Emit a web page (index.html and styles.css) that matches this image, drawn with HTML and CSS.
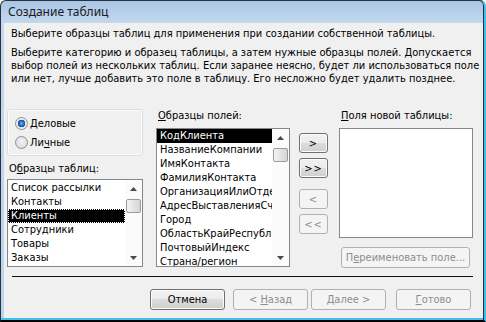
FILE: index.html
```html
<!DOCTYPE html>
<html lang="ru">
<head>
    <meta charset="UTF-8">
    <title>Создание таблиц</title>
    <link rel="stylesheet" href="styles.css">
</head>
<body>

<div class="window">
    <div class="titlebar">Создание таблиц</div>

    <div class="client">
        <p class="lead">Выберите образцы таблиц для применения при создании собственной таблицы.</p>
        <p class="intro">Выберите категорию и образец таблицы, а затем нужные образцы полей. Допускается<br>выбор полей из нескольких таблиц. Если заранее неясно, будет ли использоваться поле<br>или нет, лучше добавить это поле в таблицу. Его несложно будет удалить позднее.</p>

        <div class="picker">
            <!-- Категория и образцы таблиц -->
            <div class="col col-tables">
                <div class="group">
                    <div class="radio"><span class="dot checked"></span><span><u>Д</u>еловые</span></div>
                    <div class="radio"><span class="dot"></span><span>Ли<u>ч</u>ные</span></div>
                </div>
                <div class="caption caption-tables">О<u>б</u>разцы таблиц:</div>
                <div class="listbox list-tables">
                    <ul class="items">
                        <li>Список рассылки</li>
                        <li>Контакты</li>
                        <li class="selected focus">Клиенты</li>
                        <li>Сотрудники</li>
                        <li>Товары</li>
                        <li>Заказы</li>
                    </ul>
                    <div class="vscroll">
                        <div class="arrow"><svg width="7" height="4" viewBox="0 0 7 4"><polygon points="0,4 7,4 3.5,0" fill="#4a4a4a"/></svg></div>
                        <div class="track"><div class="thumb"></div></div>
                        <div class="arrow"><svg width="7" height="4" viewBox="0 0 7 4"><polygon points="0,0 7,0 3.5,4" fill="#4a4a4a"/></svg></div>
                    </div>
                </div>
            </div>

            <!-- Образцы полей -->
            <div class="col col-fields">
                <div class="caption"><u>О</u>бразцы полей:</div>
                <div class="listbox list-fields">
                    <ul class="items">
                        <li class="selected">КодКлиента</li>
                        <li>НазваниеКомпании</li>
                        <li>ИмяКонтакта</li>
                        <li>ФамилияКонтакта</li>
                        <li>ОрганизацияИлиОтдел</li>
                        <li>АдресВыставленияСчета</li>
                        <li>Город</li>
                        <li>ОбластьКрайРеспублика</li>
                        <li>ПочтовыйИндекс</li>
                        <li>Страна/регион</li>
                    </ul>
                    <div class="vscroll">
                        <div class="arrow"><svg width="7" height="4" viewBox="0 0 7 4"><polygon points="0,4 7,4 3.5,0" fill="#4a4a4a"/></svg></div>
                        <div class="track"><div class="thumb"></div></div>
                        <div class="arrow"><svg width="7" height="4" viewBox="0 0 7 4"><polygon points="0,0 7,0 3.5,4" fill="#4a4a4a"/></svg></div>
                    </div>
                </div>
            </div>

            <!-- Кнопки переноса -->
            <div class="col col-moves">
                <button class="btn move">&gt;</button>
                <button class="btn move">&gt;&gt;</button>
                <button class="btn move back" disabled>&lt;</button>
                <button class="btn move" disabled>&lt;&lt;</button>
            </div>

            <!-- Поля новой таблицы -->
            <div class="col col-new">
                <div class="caption"><u>П</u>оля новой таблицы:</div>
                <div class="listbox list-new"></div>
                <button class="btn rename" disabled>П<u>е</u>реименовать поле...</button>
            </div>
        </div>

        <div class="rule"></div>

        <div class="actions">
            <button class="btn">Отмена</button>
            <button class="btn btn-back" disabled>&lt; <u>Н</u>азад</button>
            <button class="btn btn-next" disabled><u>Д</u>алее &gt;</button>
            <button class="btn btn-done" disabled><u>Г</u>отово</button>
        </div>
    </div>
</div>

</body>
</html>
```

FILE: styles.css
```css
body {
    margin: 0;
    font-family: "DejaVu Sans Condensed", "Liberation Sans", sans-serif;
    font-size: 11px;
    color: #000;
    background: #fff;
}
.window {
    width: 486px;
    height: 322px;
    box-sizing: border-box;
    display: flex;
    flex-direction: column;
    border: 1px solid #27313e;
    border-right: 2px solid #3ec1ef;
    border-bottom: 2px solid #000;
    border-radius: 6px 6px 0 0;
    background: linear-gradient(to bottom, #a9c6e5, #c3d8ee 22px, #bdd4ec);
    box-shadow: inset -1px 0 0 #24303c, inset 0 -2px 0 #3ec1ef;
}
.titlebar {
    height: 22px;
    padding-left: 7px;
    line-height: 22px;
    font-family: "Noto Sans", "Liberation Sans", sans-serif;
    font-size: 12px;
    color: #1b1b1b;
}
.client {
    flex: 1;
    margin: 0 1px 2px 3px;
    padding: 4px 0 0 3px;
    background: #f0f0f0;
}
.lead, .intro {
    margin: 0 0 0 4px;
    line-height: 13px;
    white-space: nowrap;
}
.intro {
    margin-top: 6px;
}
.picker {
    display: flex;
    margin-top: 24px;
}
.col {
    display: flex;
    flex-direction: column;
}
.col-tables {
    width: 136px;
}
.col-fields {
    width: 134px;
    margin-left: 13px;
}
.col-moves {
    width: 29px;
    margin-left: 9px;
    padding-top: 24px;
}
.col-new {
    width: 134px;
    margin-left: 11px;
}
.caption {
    margin-left: 2px;
    line-height: 13px;
    height: 13px;
    margin-bottom: 6px;
}
.caption-tables {
    margin-top: 6px;
    margin-bottom: 4px;
}
.group {
    height: 47px;
    box-sizing: border-box;
    border: 1px solid #d5dfe5;
    border-radius: 3px;
    box-shadow: inset 0 0 0 1px #fafcfd;
    padding: 6px 0 0 7px;
    display: flex;
    flex-direction: column;
    gap: 5px;
}
.radio {
    display: flex;
    align-items: center;
    height: 14px;
    gap: 2px;
}
.dot {
    width: 13px;
    height: 13px;
    box-sizing: border-box;
    border-radius: 50%;
    border: 1px solid #8e8f8f;
    background: radial-gradient(circle at 50% 40%, #f4f4f4, #d4d4d4);
}
.dot.checked {
    background: radial-gradient(circle, #5fb1f0 0, #1f6fc4 2.5px, #0e4e96 3.5px, #e8e8e8 4px, #f4f4f4 100%);
}
.listbox {
    box-sizing: border-box;
    border: 1px solid #828790;
    background: #fff;
    display: flex;
    overflow: hidden;
}
.list-tables {
    height: 88px;
}
.list-fields {
    height: 139px;
}
.list-new {
    height: 110px;
}
.items {
    flex: 1;
    list-style: none;
    margin: 0;
    padding: 0;
    overflow: hidden;
}
.list-tables .items {
    padding-top: 1px;
}
.items li {
    height: 14px;
    line-height: 14px;
    padding-left: 3px;
    white-space: nowrap;
    overflow: hidden;
}
.items li.selected {
    background: #000;
    color: #fff;
}
.items li.focus {
    outline: 1px dotted #fff;
    outline-offset: -1px;
}
.vscroll {
    width: 17px;
    display: flex;
    flex-direction: column;
    background: #fbfbfb;
}
.arrow {
    height: 17px;
    display: flex;
    align-items: center;
    justify-content: center;
}
.track {
    flex: 1;
    padding-top: 2px;
}
.thumb {
    width: 15px;
    height: 14px;
    margin-left: 1px;
    box-sizing: border-box;
    border: 1px solid #9b9b9b;
    border-radius: 2px;
    background: linear-gradient(to right, #f4f4f4, #e4e4e4 50%, #d5d5d5);
}
.btn {
    font: inherit;
    color: #000;
    height: 21px;
    padding: 0;
    box-sizing: border-box;
    border: 1px solid #707070;
    border-radius: 3px;
    background: linear-gradient(to bottom, #f2f2f2 0%, #ebebeb 50%, #dddddd 50%, #cfcfcf 100%);
    box-shadow: inset 0 0 0 1px #fbfbfb;
}
.btn:disabled {
    color: #8d8d8d;
    border-color: #adb2b5;
    background: #f4f4f4;
    box-shadow: none;
}
.move {
    width: 29px;
    height: 20px;
    margin-bottom: 5px;
    letter-spacing: 1px;
}
.move.back {
    margin-top: 6px;
}
.rename {
    width: 129px;
    margin: 9px 0 0 2px;
}
.rule {
    height: 1px;
    background: #101010;
    margin: 8px 10px 0 5px;
}
.actions {
    display: flex;
    margin-top: 12px;
    padding-left: 143px;
}
.actions .btn {
    width: 75px;
}
.btn-back {
    margin-left: 8px;
}
.btn-next {
    margin-left: 3px;
}
.btn-done {
    margin-left: 10px;
}
```
